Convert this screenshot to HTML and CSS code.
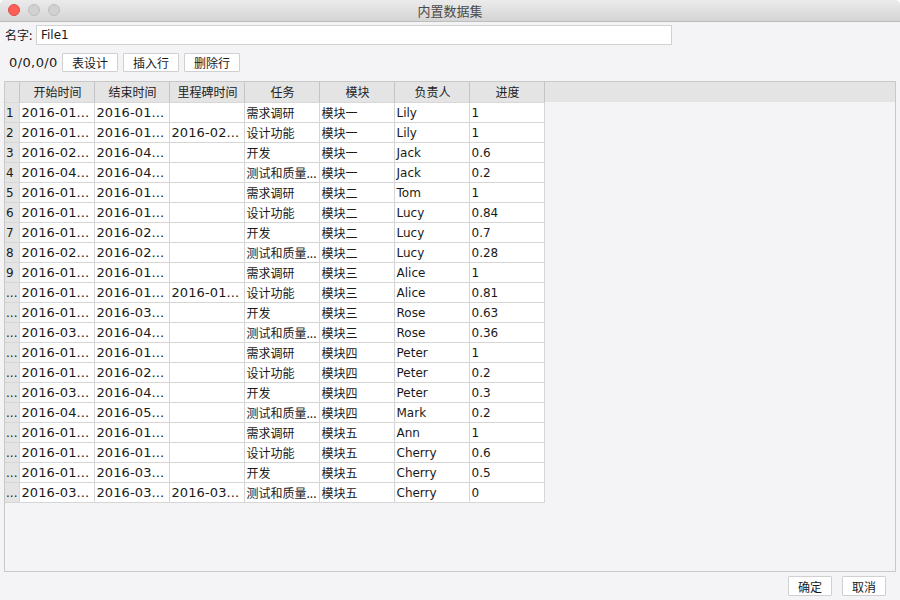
FILE: index.html
```html
<!DOCTYPE html>
<html>
<head>
<meta charset="utf-8">
<link rel="stylesheet" href="styles.css">
</head>
<body>
<div class="window">
  <div class="titlebar">
    <div class="lights">
      <span class="light red"></span>
      <span class="light grey"></span>
      <span class="light grey"></span>
    </div>
    <div class="title">内置数据集</div>
  </div>
  <div class="name-row">
    <span class="label">名字:</span>
    <div class="input">File1</div>
  </div>
  <div class="tool-row">
    <span class="count">0/0,0/0</span>
    <button class="btn">表设计</button>
    <button class="btn">插入行</button>
    <button class="btn">删除行</button>
  </div>
  <div class="table-wrap">
    <table class="grid">
      <thead>
        <tr><th class="rh"></th><th>开始时间</th><th>结束时间</th><th>里程碑时间</th><th>任务</th><th>模块</th><th>负责人</th><th>进度</th></tr>
      </thead>
      <tbody>
        <tr><td class="rh">1</td><td>2016-01...</td><td>2016-01...</td><td></td><td>需求调研</td><td>模块一</td><td>Lily</td><td>1</td></tr>
        <tr><td class="rh">2</td><td>2016-01...</td><td>2016-01...</td><td>2016-02...</td><td>设计功能</td><td>模块一</td><td>Lily</td><td>1</td></tr>
        <tr><td class="rh">3</td><td>2016-02...</td><td>2016-04...</td><td></td><td>开发</td><td>模块一</td><td>Jack</td><td>0.6</td></tr>
        <tr><td class="rh">4</td><td>2016-04...</td><td>2016-04...</td><td></td><td>测试和质量...</td><td>模块一</td><td>Jack</td><td>0.2</td></tr>
        <tr><td class="rh">5</td><td>2016-01...</td><td>2016-01...</td><td></td><td>需求调研</td><td>模块二</td><td>Tom</td><td>1</td></tr>
        <tr><td class="rh">6</td><td>2016-01...</td><td>2016-01...</td><td></td><td>设计功能</td><td>模块二</td><td>Lucy</td><td>0.84</td></tr>
        <tr><td class="rh">7</td><td>2016-01...</td><td>2016-02...</td><td></td><td>开发</td><td>模块二</td><td>Lucy</td><td>0.7</td></tr>
        <tr><td class="rh">8</td><td>2016-02...</td><td>2016-02...</td><td></td><td>测试和质量...</td><td>模块二</td><td>Lucy</td><td>0.28</td></tr>
        <tr><td class="rh">9</td><td>2016-01...</td><td>2016-01...</td><td></td><td>需求调研</td><td>模块三</td><td>Alice</td><td>1</td></tr>
        <tr><td class="rh">...</td><td>2016-01...</td><td>2016-01...</td><td>2016-01...</td><td>设计功能</td><td>模块三</td><td>Alice</td><td>0.81</td></tr>
        <tr><td class="rh">...</td><td>2016-01...</td><td>2016-03...</td><td></td><td>开发</td><td>模块三</td><td>Rose</td><td>0.63</td></tr>
        <tr><td class="rh">...</td><td>2016-03...</td><td>2016-04...</td><td></td><td>测试和质量...</td><td>模块三</td><td>Rose</td><td>0.36</td></tr>
        <tr><td class="rh">...</td><td>2016-01...</td><td>2016-01...</td><td></td><td>需求调研</td><td>模块四</td><td>Peter</td><td>1</td></tr>
        <tr><td class="rh">...</td><td>2016-01...</td><td>2016-02...</td><td></td><td>设计功能</td><td>模块四</td><td>Peter</td><td>0.2</td></tr>
        <tr><td class="rh">...</td><td>2016-03...</td><td>2016-04...</td><td></td><td>开发</td><td>模块四</td><td>Peter</td><td>0.3</td></tr>
        <tr><td class="rh">...</td><td>2016-04...</td><td>2016-05...</td><td></td><td>测试和质量...</td><td>模块四</td><td>Mark</td><td>0.2</td></tr>
        <tr><td class="rh">...</td><td>2016-01...</td><td>2016-01...</td><td></td><td>需求调研</td><td>模块五</td><td>Ann</td><td>1</td></tr>
        <tr><td class="rh">...</td><td>2016-01...</td><td>2016-01...</td><td></td><td>设计功能</td><td>模块五</td><td>Cherry</td><td>0.6</td></tr>
        <tr><td class="rh">...</td><td>2016-01...</td><td>2016-03...</td><td></td><td>开发</td><td>模块五</td><td>Cherry</td><td>0.5</td></tr>
        <tr><td class="rh">...</td><td>2016-03...</td><td>2016-03...</td><td>2016-03...</td><td>测试和质量...</td><td>模块五</td><td>Cherry</td><td>0</td></tr>
      </tbody>
    </table>
  </div>
  <div class="footer">
    <button class="btn fbtn">确定</button>
    <button class="btn fbtn">取消</button>
  </div>
</div>
</body>
</html>
```
FILE: styles.css
```css
* { box-sizing: border-box; }
html, body {
  margin: 0;
  padding: 0;
  width: 900px;
  height: 600px;
  background: #ffffff;
  overflow: hidden;
}
body {
  font-family: "DejaVu Sans", "Noto Sans CJK SC", sans-serif;
  font-size: 12px;
  color: #1a1a1a;
}
.window {
  width: 900px;
  height: 600px;
  background: #f4f4f6;
  border-radius: 5px 5px 0 0;
  overflow: hidden;
  display: flex;
  flex-direction: column;
}
.titlebar {
  height: 22px;
  flex: none;
  background: linear-gradient(#ebebeb, #d5d5d5);
  border-bottom: 1px solid #bdbdbd;
  display: flex;
  align-items: center;
  position: relative;
}
.lights {
  display: flex;
  gap: 8px;
  padding-left: 8px;
  position: absolute;
  left: 0;
  top: 4px;
}
.light {
  width: 12px;
  height: 12px;
  border-radius: 50%;
  display: block;
}
.light.red { background: #fc5f57; border: 1px solid #df4a44; }
.light.grey { background: #d1d1d1; border: 1px solid #bebebe; }
.title {
  flex: 1;
  text-align: center;
  font-family: "Noto Sans CJK SC", sans-serif;
  font-size: 13px;
  color: #4a4a4a;
  line-height: 21px;
}
.name-row {
  display: flex;
  align-items: center;
  height: 21px;
  margin-top: 2px;
  padding-left: 5px;
}
.label {
  font-family: "Noto Sans CJK SC", sans-serif;
  font-size: 12px;
  width: 31px;
}
.input {
  width: 636px;
  height: 20px;
  background: #ffffff;
  border: 1px solid #d2d2d2;
  padding-left: 4px;
  line-height: 18px;
  font-size: 12px;
}
.tool-row {
  display: flex;
  align-items: center;
  height: 20px;
  margin-top: 7px;
  padding-left: 9px;
}
.count {
  font-size: 13px;
  letter-spacing: 0.4px;
  width: 53px;
}
.btn {
  font-family: "Noto Sans CJK SC", sans-serif;
  font-size: 12px;
  background: #ffffff;
  border: 1px solid #d0d0d0;
  border-radius: 1px;
  color: #1a1a1a;
  height: 19px;
  width: 56px;
  padding: 0;
  margin: 0 5px 0 0;
  line-height: 17px;
}
.table-wrap {
  margin: 9px 0 0 4px;
  width: 892px;
  height: 491px;
  flex: none;
  border: 1px solid #c8c8c8;
  background: linear-gradient(#e4e4e4, #e4e4e4) top left / 100% 20px no-repeat, #f4f4f6;
}
.grid {
  border-collapse: collapse;
  table-layout: fixed;
  width: 539px;
}
.grid th, .grid td {
  height: 20px;
  padding: 0 0 0 2px;
  white-space: nowrap;
  overflow: hidden;
  width: 75px;
}
.grid th {
  font-family: "Noto Sans CJK SC", sans-serif;
  font-weight: normal;
  font-size: 12px;
  color: #222;
  text-align: center;
  background: #e4e4e4;
  border-right: 1px solid #c4c4c4;
  border-bottom: 1px solid #d8d8d8;
  height: 20px;
}
.grid td {
  background: #ffffff;
  border-right: 1px solid #d6d6d6;
  border-bottom: 1px solid #d6d6d6;
  font-size: 12px;
  line-height: 18px;
  padding-top: 1px;
}
.grid td:nth-child(2), .grid td:nth-child(3), .grid td:nth-child(4) {
  font-size: 13px;
  letter-spacing: 0.1px;
}
.grid .rh {
  width: 14px;
  padding: 1px 0 0 1px;
  background: #e4e4e4;
  text-align: left;
  font-size: 12px;
}
.grid td:nth-child(5), .grid td:nth-child(6) {
  font-family: "Noto Sans CJK SC", sans-serif;
}
.footer {
  display: flex;
  justify-content: flex-end;
  padding-right: 14px;
  margin-top: 4px;
  gap: 10px;
}
.fbtn {
  width: 44px;
  height: 20px;
  margin: 0;
}
```
